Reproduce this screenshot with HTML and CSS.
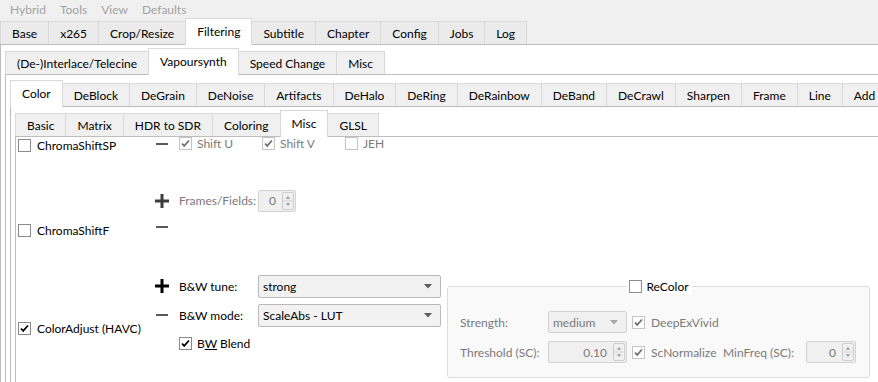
FILE: index.html
```html
<!DOCTYPE html>
<html lang="en">
<head>
  <meta charset="UTF-8">
  <title>Hybrid - Filtering</title>
  <link rel="stylesheet" href="styles.css">
</head>

<body>

  <!-- Menu bar -->
  <div class="menubar">
    <span class="menu-item">Hybrid</span>
    <span class="menu-item">Tools</span>
    <span class="menu-item">View</span>
    <span class="menu-item">Defaults</span>
  </div>

  <!-- Main tabs -->
  <div class="tabwidget main-tabs">
    <div class="tabbar">
      <div class="tab">Base</div>
      <div class="tab">x265</div>
      <div class="tab">Crop/Resize</div>
      <div class="tab active">Filtering</div>
      <div class="tab">Subtitle</div>
      <div class="tab">Chapter</div>
      <div class="tab">Config</div>
      <div class="tab">Jobs</div>
      <div class="tab">Log</div>
    </div>

    <div class="pane">
      <!-- Filtering tabs -->
      <div class="tabbar">
        <div class="tab">(De-)Interlace/Telecine</div>
        <div class="tab active">Vapoursynth</div>
        <div class="tab">Speed Change</div>
        <div class="tab">Misc</div>
      </div>

      <div class="pane pane-loose">
        <!-- Vapoursynth tabs -->
        <div class="tabbar">
          <div class="tab active">Color</div>
          <div class="tab">DeBlock</div>
          <div class="tab">DeGrain</div>
          <div class="tab">DeNoise</div>
          <div class="tab">Artifacts</div>
          <div class="tab">DeHalo</div>
          <div class="tab">DeRing</div>
          <div class="tab">DeRainbow</div>
          <div class="tab">DeBand</div>
          <div class="tab">DeCrawl</div>
          <div class="tab">Sharpen</div>
          <div class="tab">Frame</div>
          <div class="tab">Line</div>
          <div class="tab">Add</div>
        </div>

        <div class="pane">
          <!-- Color tabs -->
          <div class="tabbar">
            <div class="tab">Basic</div>
            <div class="tab">Matrix</div>
            <div class="tab">HDR to SDR</div>
            <div class="tab">Coloring</div>
            <div class="tab active">Misc</div>
            <div class="tab">GLSL</div>
          </div>

          <div class="pane pane-content">
            <div class="content">
              <div class="filters">

                <!-- ChromaShiftSP -->
                <div class="filter filter-clipped">
                  <label class="filter-name">
                    <span class="check"></span>ChromaShiftSP
                  </label>
                  <div class="filter-body">
                    <div class="opt-row disabled">
                      <svg class="toggle minus" viewBox="0 0 16 16"><path d="M2 8h12"/></svg>
                      <span class="shift-opt"><span class="check on"><svg viewBox="0 0 11 11"><path d="M2 5.5l2.2 2.4L9 2.5"/></svg></span>Shift U</span>
                      <span class="shift-opt"><span class="check on"><svg viewBox="0 0 11 11"><path d="M2 5.5l2.2 2.4L9 2.5"/></svg></span>Shift V</span>
                      <span class="shift-opt"><span class="check"></span>JEH</span>
                    </div>
                  </div>
                </div>

                <!-- ChromaShiftF -->
                <div class="filter filter-shift">
                  <label class="filter-name">
                    <span class="check"></span>ChromaShiftF
                  </label>
                  <div class="filter-body">
                    <div class="opt-row disabled">
                      <svg class="toggle plus plus-dim" viewBox="0 0 16 16"><path d="M8 1v14M1 8h14"/></svg>
                      <span class="opt-label">Frames/Fields:</span>
                      <span class="spin spin-frames">
                        <span class="spin-value">0</span>
                        <span class="spin-btns"><svg viewBox="0 0 10 18"><path class="tri" d="M2.5 6.5L5 3.5l2.5 3zM2.5 11.5L5 14.5l2.5-3z"/><path class="sep" d="M0 9h10"/></svg></span>
                      </span>
                    </div>
                    <div class="opt-row">
                      <svg class="toggle minus" viewBox="0 0 16 16"><path d="M2 8h12"/></svg>
                    </div>
                  </div>
                </div>

                <!-- ColorAdjust -->
                <div class="filter filter-adjust">
                  <label class="filter-name">
                    <span class="check on"><svg viewBox="0 0 11 11"><path d="M2 5.5l2.2 2.4L9 2.5"/></svg></span>ColorAdjust (HAVC)
                  </label>
                  <div class="filter-body">
                    <div class="opt-row tall">
                      <svg class="toggle plus" viewBox="0 0 16 16"><path d="M8 1v14M1 8h14"/></svg>
                      <span class="opt-label">B&amp;W tune:</span>
                      <span class="combo">strong<svg class="arrow" viewBox="0 0 8 5"><path d="M0 0h8L4 4.5z"/></svg></span>
                    </div>
                    <div class="opt-row tall">
                      <svg class="toggle minus" viewBox="0 0 16 16"><path d="M2 8h12"/></svg>
                      <span class="opt-label">B&amp;W mode:</span>
                      <span class="combo">ScaleAbs - LUT<svg class="arrow" viewBox="0 0 8 5"><path d="M0 0h8L4 4.5z"/></svg></span>
                    </div>
                    <label class="blend-row">
                      <span class="check on"><svg viewBox="0 0 11 11"><path d="M2 5.5l2.2 2.4L9 2.5"/></svg></span>
                      <span>B<u>W</u> Blend</span>
                    </label>
                  </div>

                  <div class="group">
                    <label class="group-title">
                      <span class="check"></span>ReColor
                    </label>
                    <div class="group-grid disabled">
                      <span>Strength:</span>
                      <span class="combo combo-small">medium<svg class="arrow" viewBox="0 0 8 5"><path d="M0 0h8L4 4.5z"/></svg></span>
                      <span class="group-check"><span class="check on"><svg viewBox="0 0 11 11"><path d="M2 5.5l2.2 2.4L9 2.5"/></svg></span>DeepExVivid</span>
                      <span></span>
                      <span></span>

                      <span>Threshold (SC):</span>
                      <span class="spin">
                        <span class="spin-value">0.10</span>
                        <span class="spin-btns"><svg viewBox="0 0 10 18"><path class="tri" d="M2.5 6.5L5 3.5l2.5 3zM2.5 11.5L5 14.5l2.5-3z"/><path class="sep" d="M0 9h10"/></svg></span>
                      </span>
                      <span class="group-check"><span class="check on"><svg viewBox="0 0 11 11"><path d="M2 5.5l2.2 2.4L9 2.5"/></svg></span>ScNormalize</span>
                      <span>MinFreq (SC):</span>
                      <span class="spin">
                        <span class="spin-value">0</span>
                        <span class="spin-btns"><svg viewBox="0 0 10 18"><path class="tri" d="M2.5 6.5L5 3.5l2.5 3zM2.5 11.5L5 14.5l2.5-3z"/><path class="sep" d="M0 9h10"/></svg></span>
                      </span>
                    </div>
                  </div>
                </div>

              </div>

              <!-- group boxes cut off by the window edge -->
              <div class="side">
                <div class="side-box side-a"></div>
                <div class="side-box side-b"></div>
                <div class="side-box side-c"></div>
              </div>
            </div>
          </div>
        </div>
      </div>
    </div>
  </div>

</body>
</html>
```

FILE: styles.css
```css
:root {
  --window-bg: #f0f0f0;
  --tab-border: #d9d9d9;
  --pane-border: #bdbdbd;
  --box-border: #dcdcdc;
  --disabled-text: #7a7a7a;
}

html, body {
  width: 878px;
  height: 382px;
  margin: 0;
  padding: 0;
  overflow: hidden;
  background-color: var(--window-bg);
  font-family: Lato, "Noto Sans", sans-serif;
  font-size: 12px;
  color: #000;
}

/* Menu bar */
.menubar {
  height: 18px;
  display: flex;
  align-items: center;
  padding-left: 3px;
  color: #a3a3a3;
}

.menu-item {
  padding: 0 7px;
}

/* Tabs */
.main-tabs {
  width: 898px;
}

.tabbar {
  display: flex;
  align-items: flex-end;
  height: 26px;
  white-space: nowrap;
}

.tab {
  flex: none;
  box-sizing: border-box;
  height: 23px;
  padding: 0 11px;
  display: flex;
  align-items: center;
  border: 1px solid var(--tab-border);
  border-bottom: none;
  margin-right: -1px;
  background-color: #f0f0f0;
}

.main-tabs > .tabbar .tab {
  background-color: #ebebeb;
}

.main-tabs > .tabbar .tab.active,
.tab.active {
  height: 27px;
  margin-bottom: -1px;
  padding-bottom: 2px;
  background-color: #fff;
  position: relative;
  z-index: 1;
}

.pane {
  border: 1px solid var(--pane-border);
  border-right-color: transparent;
  background-color: #fff;
  padding: 3px 0 0 4px;
}

.pane-loose {
  padding-top: 5px;
}

.pane-content {
  padding: 0 0 0 2px;
}

/* Filter list */
.content {
  display: flex;
  height: 260px;
  overflow: hidden;
}

.filters {
  flex: 1;
}

.filter {
  display: flex;
}

.filter-clipped {
  margin-top: -5px;
}

.filter-clipped .filter-name {
  padding-top: 3px;
}

.filter-shift {
  margin-top: 34px;
}

.filter-adjust {
  margin-top: 36px;
}

.filter-name {
  width: 136px;
  flex: none;
  display: flex;
  align-items: center;
  gap: 6px;
  white-space: nowrap;
}

.filter-shift .filter-name {
  align-self: flex-end;
  height: 16px;
}

.filter-adjust .filter-name {
  padding-top: 4px;
}

.filter-body {
  display: flex;
  flex-direction: column;
  gap: 3px;
}

.filter-adjust .filter-body {
  gap: 5px;
}

.opt-row {
  display: flex;
  align-items: center;
  height: 23px;
  white-space: nowrap;
}

.opt-row.tall {
  height: 24px;
}

.disabled {
  color: var(--disabled-text);
}

.opt-label {
  width: 79px;
  flex: none;
}

/* +/- toggles */
.toggle {
  width: 16px;
  height: 16px;
  flex: none;
  margin-right: 9px;
  fill: none;
}

.toggle.plus path {
  stroke: #000;
  stroke-width: 3;
}

.toggle.plus-dim path {
  stroke: #3c3c3c;
}

.toggle.minus path {
  stroke: #5a5a5a;
  stroke-width: 2;
}

.shift-opt {
  width: 83px;
  display: flex;
  align-items: center;
  gap: 5px;
}

/* Checkboxes */
.check {
  width: 13px;
  height: 13px;
  box-sizing: border-box;
  flex: none;
  display: inline-flex;
  align-items: center;
  justify-content: center;
  border: 1px solid #8a8a8a;
  background-color: #fff;
}

.check svg {
  width: 11px;
  height: 11px;
  fill: none;
  stroke: #000;
  stroke-width: 1.7;
}

.disabled .check {
  border-color: #c4c4c4;
}

.disabled .check svg {
  stroke: #6e6e6e;
}

.blend-row {
  height: 16px;
  margin-top: 3px;
  margin-left: 25px;
  display: flex;
  align-items: center;
  gap: 5px;
}

/* Combo boxes */
.combo {
  box-sizing: border-box;
  width: 183px;
  height: 23px;
  display: flex;
  align-items: center;
  justify-content: space-between;
  padding: 0 5px 0 4px;
  border: 1px solid #b9b9b9;
  border-radius: 2px;
  background-color: #f2f2f2;
}

.combo .arrow {
  width: 8px;
  height: 5px;
  margin-right: 3px;
  fill: #5c5c5c;
}

.combo-small {
  width: 79px;
  height: 22px;
  border-color: #d2d2d2;
  background-color: #f0f0f0;
}

.combo-small .arrow {
  fill: #a8a8a8;
}

/* Spin boxes */
.spin {
  box-sizing: border-box;
  width: 79px;
  height: 22px;
  display: flex;
  align-items: center;
  padding-right: 1px;
  border: 1px solid #d2d2d2;
  border-radius: 2px;
  background-color: #f0f0f0;
}

.spin-frames {
  width: 38px;
}

.spin-value {
  flex: 1;
  text-align: right;
  padding-right: 6px;
}

.spin-btns {
  box-sizing: border-box;
  width: 12px;
  height: 18px;
  display: flex;
  border: 1px solid #cdcdcd;
  border-radius: 2px;
}

.spin-btns svg {
  width: 10px;
  height: 16px;
}

.spin-btns .tri {
  fill: #9a9a9a;
}

.spin-btns .sep {
  stroke: #cdcdcd;
  stroke-width: 1;
}

/* ReColor group */
.group {
  box-sizing: border-box;
  width: 423px;
  height: 92px;
  margin: 12px 0 0 6px;
  padding: 24px 0 0 12px;
  border: 1px solid var(--box-border);
  border-radius: 3px;
  background-color: #f9f9f9;
  position: relative;
}

.group-title {
  position: absolute;
  top: -8px;
  left: 50%;
  transform: translateX(-50%);
  display: flex;
  align-items: center;
  gap: 5px;
  padding: 0 3px;
  background-color: #fff;
  white-space: nowrap;
}

.group-grid {
  display: grid;
  grid-template-columns: 88px 79px 96px 83px 50px;
  grid-auto-rows: 22px;
  row-gap: 8px;
  align-items: center;
  white-space: nowrap;
}

.group-grid .spin:last-child {
  width: 50px;
}

.group-check {
  display: flex;
  align-items: center;
  gap: 6px;
  padding-left: 5px;
}

/* Group boxes on the far right, cut by the window */
.side {
  width: 7px;
  flex: none;
}

.side-box {
  box-sizing: border-box;
  border: 1px solid var(--box-border);
  border-right: none;
  border-radius: 3px 0 0 3px;
}

.side-a {
  margin-top: 1px;
  height: 46px;
}

.side-b {
  margin-top: 23px;
  height: 62px;
}

.side-c {
  margin-top: 23px;
  height: 62px;
}
```
